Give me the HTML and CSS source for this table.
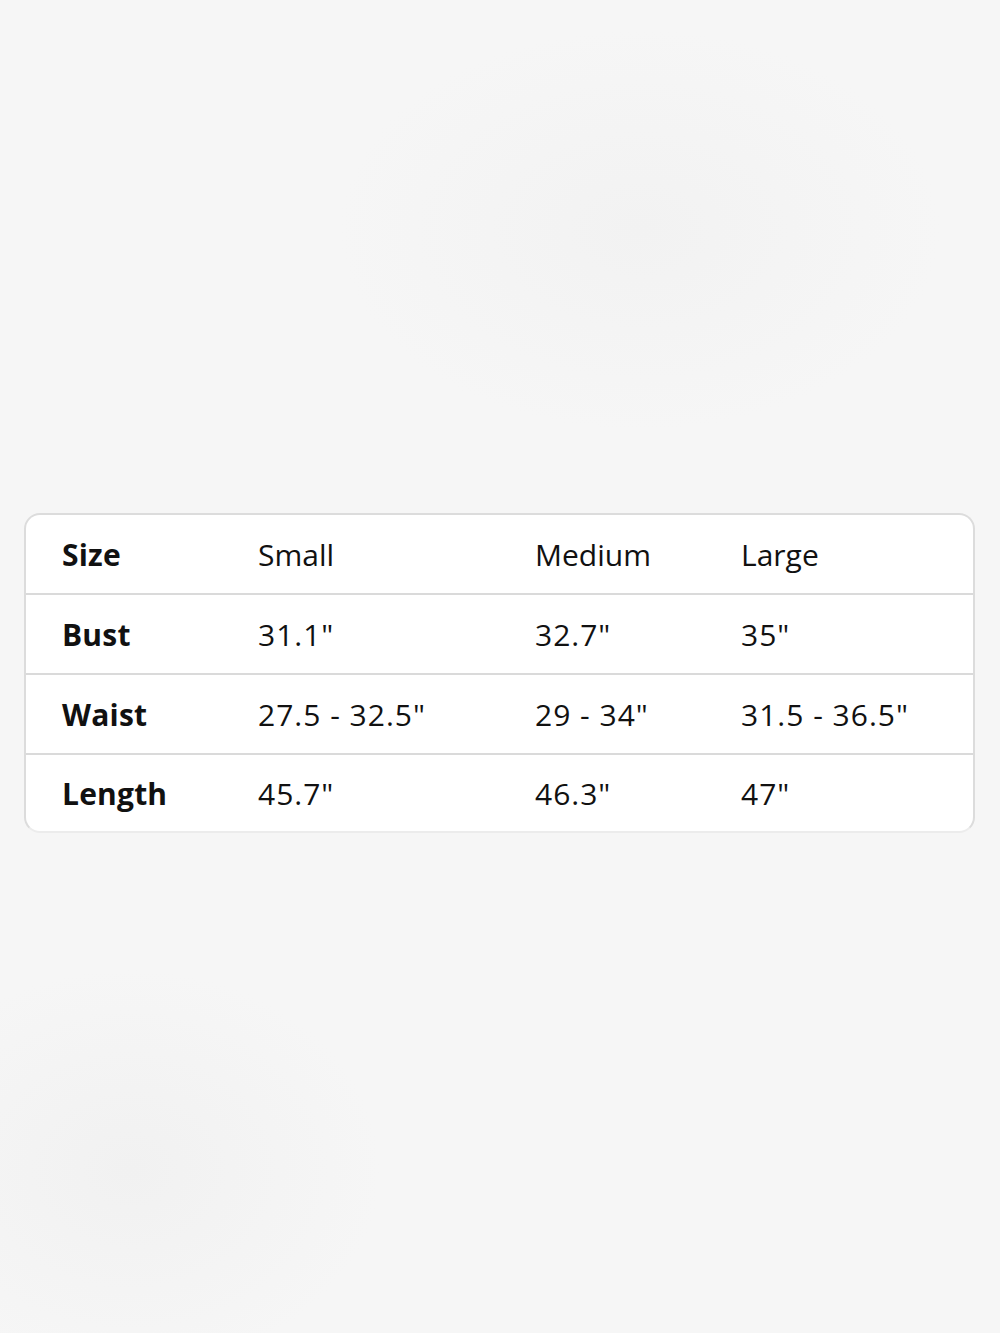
FILE: index.html
```html
<!DOCTYPE html>
<html lang="en">
<head>
<meta charset="utf-8">
<title>Size chart</title>
<link rel="stylesheet" href="styles.css">
</head>
<body>
<div class="page">
  <div class="card">
    <div class="row">
      <div class="label">Size</div><div class="cell">Small</div><div class="cell">Medium</div><div class="cell">Large</div>
    </div>
    <div class="row">
      <div class="label">Bust</div><div class="cell num">31.1"</div><div class="cell num">32.7"</div><div class="cell num">35"</div>
    </div>
    <div class="row">
      <div class="label">Waist</div><div class="cell num">27.5 - 32.5"</div><div class="cell num">29 - 34"</div><div class="cell num">31.5 - 36.5"</div>
    </div>
    <div class="row last">
      <div class="label">Length</div><div class="cell num">45.7"</div><div class="cell num">46.3"</div><div class="cell num">47"</div>
    </div>
  </div>
</div>
</body>
</html>
```

FILE: styles.css
```css
html, body {
  margin: 0;
  padding: 0;
}
body {
  width: 1000px;
  height: 1333px;
  background: radial-gradient(ellipse 300px 200px at 640px 230px, #f2f2f2, rgba(242,242,242,0)),
              radial-gradient(ellipse 250px 200px at 130px 1170px, #f1f1f1, rgba(241,241,241,0)),
              #f6f6f6;
  font-family: "Open Sans", "Noto Sans", sans-serif;
  color: #111;
  overflow: hidden;
}
.page {
  padding: 513px 25px 0 24px;
}
.card {
  background: #fff;
  border: 2px solid #dcdcdc;
  border-bottom-color: #ececec;
  border-radius: 16px;
  overflow: hidden;
}
.row {
  display: grid;
  grid-template-columns: 196px 277px 206px 1fr;
  align-items: center;
  height: 78px;
  padding-left: 36px;
  border-bottom: 2px solid #dadada;
  font-size: 30px;
}
.row.last {
  border-bottom: none;
  height: 76px;
}
.label {
  font-weight: 700;
  letter-spacing: 0.2px;
}
.cell {
  font-weight: 400;
}
.num {
  letter-spacing: 1px;
}
```
